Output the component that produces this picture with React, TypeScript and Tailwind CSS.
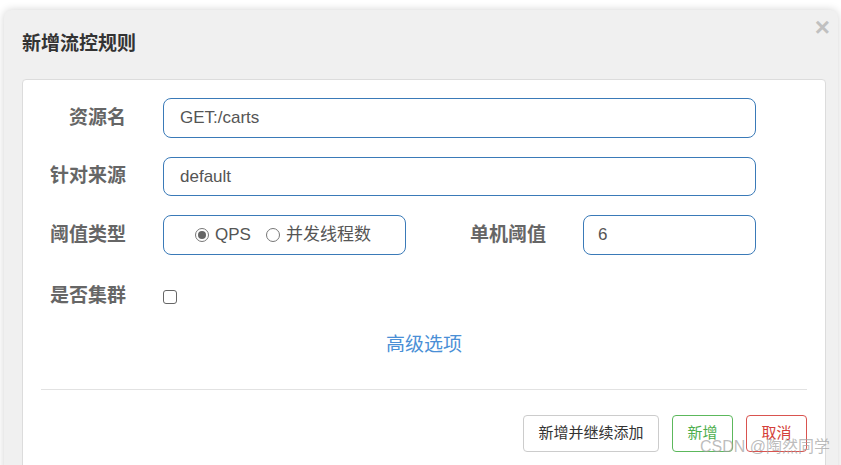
import React from 'react'

const font = { fontFamily: '"Liberation Sans", "Noto Sans CJK SC", sans-serif' }

function Radio({ checked, label }: { checked?: boolean; label: string }) {
  return (
    <label className="flex items-center gap-[6px] text-[17px] text-[#555]">
      <span className="flex h-[14px] w-[14px] items-center justify-center rounded-full border border-[#777] bg-white">
        {checked && <span className="h-[8px] w-[8px] rounded-full bg-[#666]" />}
      </span>
      {label}
    </label>
  )
}

export default function App() {
  return (
    <div className="relative h-[465px] w-[841px] overflow-hidden bg-white pl-[4px] pr-[3px] pt-[10px]" style={font}>
      <div className="relative h-[470px] rounded-lg bg-[#f0f0f0] shadow-[0_0_8px_rgba(0,0,0,0.18)]">
        {/* header */}
        <div className="flex h-[69px] items-center pl-[18px]">
          <h3 className="text-[19px] font-bold text-[#333]">新增流控规则</h3>
        </div>
        <button className="absolute right-[8px] top-[4px] text-[26px] font-bold leading-none text-[#c0c0c0]">×</button>

        {/* body */}
        <div className="ml-[18px] mr-[12px] h-[400px] rounded-[4px] border border-[#dcdcdc] bg-white pt-[18px]">
          <div className="flex flex-col gap-[19px]">
            <div className="flex items-center">
              <div className="w-[103px] text-right text-[19px] font-bold text-[#666]">资源名</div>
              <div className="ml-[37px] flex h-[40px] w-[593px] items-center rounded-lg border border-[#3a7ab8] px-[16px] text-[17px] text-[#555]">
                GET:/carts
              </div>
            </div>
            <div className="flex items-center">
              <div className="w-[103px] text-right text-[19px] font-bold text-[#666]">针对来源</div>
              <div className="ml-[37px] flex h-[39px] w-[593px] items-center rounded-lg border border-[#3a7ab8] px-[16px] text-[17px] text-[#555]">
                default
              </div>
            </div>
            <div className="flex items-center">
              <div className="w-[103px] text-right text-[19px] font-bold text-[#666]">阈值类型</div>
              <div className="ml-[37px] flex h-[40px] w-[243px] items-center gap-[15px] rounded-lg border border-[#3a7ab8] pl-[31px]">
                <Radio checked label="QPS" />
                <Radio label="并发线程数" />
              </div>
              <div className="w-[140px] text-right text-[19px] font-bold text-[#666]">单机阈值</div>
              <div className="ml-[37px] flex h-[40px] w-[173px] items-center rounded-lg border border-[#3a7ab8] px-[14px] text-[17px] text-[#555]">
                6
              </div>
            </div>
            <div className="flex h-[39px] items-center pt-[6px]">
              <div className="w-[103px] text-right text-[19px] font-bold text-[#666]">是否集群</div>
              <span className="ml-[37px] h-[14px] w-[14px] rounded-[3px] border border-[#666] bg-white" />
            </div>
          </div>

          <div className="mt-[18px] text-center text-[19px] text-[#4a8fd6]">高级选项</div>

          <div className="mx-[18px] mt-[29px] border-t border-[#e2e2e2]" />

          <div className="mr-[18px] mt-[25px] flex justify-end gap-[13px]">
            <button className="h-[37px] w-[136px] rounded-[4px] border border-[#ccc] bg-white text-[15px] text-[#333]">
              新增并继续添加
            </button>
            <button className="h-[37px] w-[61px] rounded-[4px] border border-[#5cb85c] bg-white text-[15px] text-[#4cae4c]">
              新增
            </button>
            <button className="h-[37px] w-[61px] rounded-[4px] border border-[#d9534f] bg-white text-[15px] text-[#d43f3a]">
              取消
            </button>
          </div>
        </div>
      </div>

      <div className="absolute bottom-[6px] right-[11px] text-[16px] text-[rgba(160,160,160,0.7)]">
        CSDN @陶然同学
      </div>
    </div>
  )
}
